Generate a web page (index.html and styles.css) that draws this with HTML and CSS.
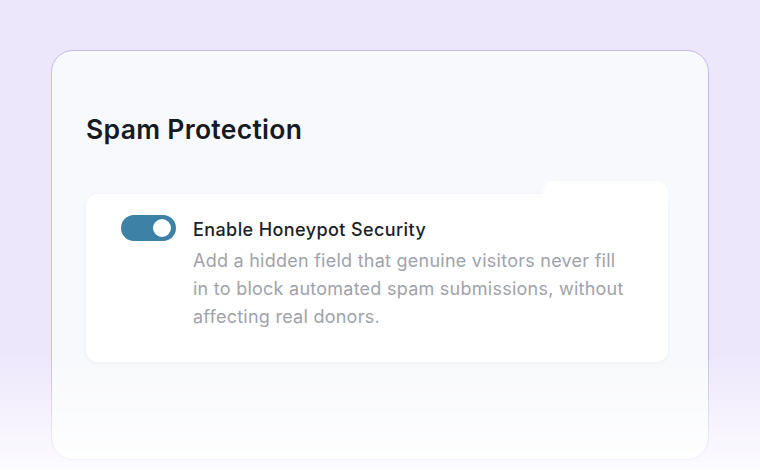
FILE: index.html
```html
<!DOCTYPE html>
<html lang="en">
<head>
  <meta charset="UTF-8" />
  <meta name="viewport" content="width=device-width, initial-scale=1.0"/>
  <title>Spam Protection</title>
  <link rel="stylesheet" href="styles.css">
</head>
<body>
  <div class="settings-card">
    <h2 class="section-title">Spam Protection</h2>

    <div class="option-box">
      <label class="switch">
        <input type="checkbox" checked />
        <span class="slider"></span>
      </label>
      <div class="option-text">
        <div class="option-label">Enable Honeypot Security</div>
        <p class="option-desc">Add a hidden field that genuine visitors never fill in to block automated spam submissions, without affecting real donors.</p>
      </div>
    </div>
  </div>

  <div class="bottom-fade"></div>
</body>
</html>
```

FILE: styles.css
```css
body {
  font-family: Inter, "Noto Sans", sans-serif;
  background-color: #ede7fc;
  margin: 0;
  padding: 50px 51px 0;
  height: 470px;
  box-sizing: border-box;
  overflow: hidden;
}

.settings-card {
  width: 658px;
  height: 410px;
  box-sizing: border-box;
  background-color: #f8f9fc;
  border: 1.5px solid #c8baef;
  border-radius: 22px;
  padding: 61px 40px 0 34px;
}

.section-title {
  margin: 0;
  font-size: 26.5px;
  line-height: 34px;
  font-weight: 600;
  color: #161a24;
  letter-spacing: 0.3px;
}

.option-box {
  position: relative;
  margin-top: 48px;
  background-color: #fff;
  border-radius: 12px;
  box-shadow: 0 1px 4px rgba(30, 30, 60, 0.05);
  padding: 22px 20px 31px 35px;
  display: flex;
  gap: 17px;
}

/* small raised strip on the top right edge */
.option-box::before {
  content: "";
  position: absolute;
  top: -13px;
  right: 0;
  width: 125px;
  height: 20px;
  background-color: #fff;
  border-radius: 10px 12px 0 0;
}

.switch {
  position: relative;
  flex-shrink: 0;
  width: 55px;
  height: 26px;
  margin-top: -1px;
}

.switch input {
  display: none;
}

.slider {
  position: absolute;
  inset: 0;
  background-color: #3d81a6;
  border-radius: 13px;
}

.slider::after {
  content: "";
  position: absolute;
  top: 4px;
  right: 5px;
  width: 18px;
  height: 18px;
  border-radius: 50%;
  background-color: #fff;
}

.option-text {
  position: relative;
}

.option-label {
  font-size: 18px;
  line-height: 28px;
  font-weight: 500;
  color: #1b1e27;
  letter-spacing: 0.4px;
}

.option-desc {
  margin: 3px 0 0;
  max-width: 438px;
  font-size: 18px;
  line-height: 28px;
  color: #9fa2ab;
  letter-spacing: 0.25px;
}

.bottom-fade {
  position: fixed;
  left: 0;
  right: 0;
  bottom: 0;
  height: 120px;
  background: linear-gradient(rgba(255, 255, 255, 0), rgba(255, 255, 255, 0.85));
  pointer-events: none;
}
```
